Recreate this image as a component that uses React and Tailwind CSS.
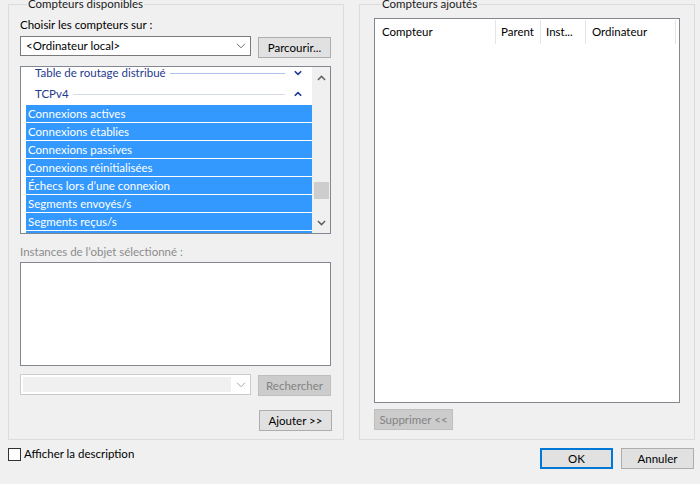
import React from 'react';

const font = { fontFamily: 'Lato, "Liberation Sans", Arial, sans-serif' };

const ChevronDown = ({ className = '', color = '#6d6d6d', w = 10, h = 6, sw = 1 }) => (
  <svg width={w} height={h} viewBox="0 0 10 6" className={className}>
    <path d="M1 0.8 L5 4.8 L9 0.8" fill="none" stroke={color} strokeWidth={sw} />
  </svg>
);

const ChevronUp = ({ className = '', color = '#6d6d6d', w = 10, h = 6, sw = 1 }) => (
  <svg width={w} height={h} viewBox="0 0 10 6" className={className}>
    <path d="M1 5.2 L5 1.2 L9 5.2" fill="none" stroke={color} strokeWidth={sw} />
  </svg>
);

const Button = ({ children, disabled, primary, className = '' }) => (
  <button
    className={`h-[21px] w-[73px] text-[11.5px] leading-none ${
      disabled
        ? 'bg-[#cccccc] border border-[#bfbfbf] text-[#838383]'
        : primary
        ? 'bg-[#e1e1e1] border-2 border-[#0078d7] text-black'
        : 'bg-[#e1e1e1] border border-[#adadad] text-black'
    } ${className}`}
  >
    {children}
  </button>
);

const counters = [
  'Connexions actives',
  'Connexions établies',
  'Connexions passives',
  'Connexions réinitialisées',
  'Échecs lors d’une connexion',
  'Segments envoyés/s',
  'Segments reçus/s',
];

const GroupHeader = ({ label, open, line, className = '' }) => (
  <div className={`flex items-center pl-[14px] pr-[10px] text-[#1f3a8f] ${className}`}>
    <span className="whitespace-nowrap">{label}</span>
    <div className={`flex-1 h-px ml-[4px] mr-[9px] ${line}`} />
    {open ? (
      <ChevronUp color="#1f3a8f" w={8} h={6} sw={2} />
    ) : (
      <ChevronDown color="#1f3a8f" w={8} h={6} sw={2} />
    )}
  </div>
);

const AvailableCounters = () => (
  <fieldset className="w-[336px] h-[443px] border border-[#dcdcdc] px-[11px] -mt-[7px]">
    <legend className="ml-[7px] px-[1px] leading-[14px] text-[#1a1a1a]">Compteurs disponibles</legend>

    <div className="mt-[6px] leading-[16px]">Choisir les compteurs sur :</div>

    <div className="flex items-start mt-[3px]">
      <div className="w-[231px] h-[20px] border border-[#7a7a7a] bg-white flex items-center pl-[5px] pr-[4px]">
        <span className="flex-1">&lt;Ordinateur local&gt;</span>
        <ChevronDown />
      </div>
      <Button className="ml-[7px] mt-[1px]">Parcourir...</Button>
    </div>

    {/* counters list */}
    <div className="mt-[8px] w-[311px] h-[168px] border border-[#828790] flex overflow-hidden">
      <div className="w-[291px] bg-white overflow-hidden">
        <GroupHeader label="Table de routage distribué" line="bg-[#aec4ea]" className="h-[18px] -mt-[3px]" />
        <GroupHeader label="TCPv4" open line="bg-[#d5dbe8]" className="h-[22px] pt-[2px]" />
        <div className="pl-[5px] pt-[1px]">
          {counters.map((c) => (
            <div key={c} className="h-[17px] mb-px bg-[#3399ff] text-white pl-[2px] leading-[17px] whitespace-nowrap">
              {c}
            </div>
          ))}
          <div className="h-[17px] bg-[#3399ff]" />
        </div>
      </div>
      <div className="w-[18px] bg-[#f0f0f0] flex flex-col items-center">
        <ChevronUp className="mt-[8px]" color="#606060" w={9} h={6} sw={1.6} />
        <div className="mt-[101px] w-[15px] h-[17px] bg-[#cdcdcd]" />
        <ChevronDown className="mt-[21px]" color="#606060" w={9} h={6} sw={1.6} />
      </div>
    </div>

    <div className="mt-[10px] leading-[16px] text-[#8c8c8c]">Instances de l’objet sélectionné :</div>
    <div className="mt-[2px] w-[311px] h-[104px] border border-[#828790] bg-white" />

    <div className="flex items-start mt-[8px]">
      <div className="w-[231px] h-[21px] border border-[#cccccc] bg-white flex items-center p-[2px] pr-[4px]">
        <div className="w-[208px] h-full bg-[#f0f0f0]" />
        <div className="flex-1" />
        <ChevronDown color="#a8a8a8" />
      </div>
      <Button disabled className="ml-[7px] mt-[1px]">Rechercher</Button>
    </div>

    <div className="flex justify-end mt-[14px]">
      <Button>Ajouter &gt;&gt;</Button>
    </div>
  </fieldset>
);

const columns = [
  { label: 'Compteur', w: 'w-[121px]', pl: 'pl-[7px]' },
  { label: 'Parent', w: 'w-[45px]', pl: 'pl-[5px]' },
  { label: 'Inst...', w: 'w-[45px]', pl: 'pl-[5px]' },
  { label: 'Ordinateur', w: 'w-[90px]', pl: 'pl-[6px]' },
];

const AddedCounters = () => (
  <fieldset className="w-[336px] h-[443px] border border-[#dcdcdc] px-[14px] -mt-[7px]">
    <legend className="ml-[7px] px-[1px] leading-[14px] text-[#1a1a1a]">Compteurs ajoutés</legend>

    <div className="mt-[7px] w-[306px] h-[385px] border border-[#828790] bg-white">
      <div className="flex h-[24px] mt-px">
        {columns.map((c) => (
          <div key={c.label} className={`${c.w} ${c.pl} h-full flex items-center border-r border-[#e5e5e5] whitespace-nowrap`}>
            {c.label}
          </div>
        ))}
      </div>
    </div>

    <Button disabled className="mt-[6px] w-[79px]">Supprimer &lt;&lt;</Button>
  </fieldset>
);

export default function App() {
  return (
    <div className="w-[700px] h-[484px] bg-[#f0f0f0] overflow-hidden text-[11.5px] text-black" style={font}>
      <div className="flex gap-[15px] pl-[8px] pt-[4px]">
        <AvailableCounters />
        <AddedCounters />
      </div>

      <div className="flex items-start pl-[8px] pr-[6px] mt-[6px]">
        <label className="flex items-center gap-[3px] mt-[1px]">
          <span className="w-[13px] h-[13px] border border-[#333333] bg-white" />
          <span className="leading-[14px]">Afficher la description</span>
        </label>
        <div className="flex-1" />
        <Button primary className="mt-[2px]">OK</Button>
        <Button className="ml-[8px] mt-[2px]">Annuler</Button>
      </div>
    </div>
  );
}
